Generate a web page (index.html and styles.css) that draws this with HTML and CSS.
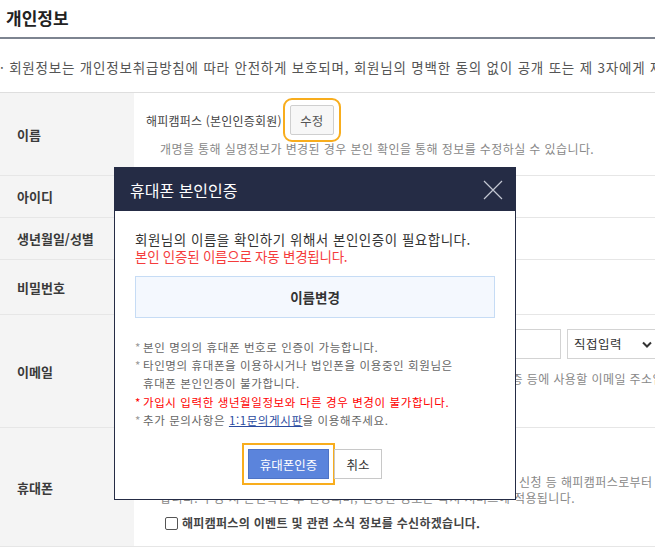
FILE: index.html
```html
<!DOCTYPE html>
<html lang="ko">
<head>
  <meta charset="UTF-8" />
  <meta name="viewport" content="width=device-width, initial-scale=1" />
  <title>개인정보</title>
  <link rel="stylesheet" href="styles.css">
</head>
<body>
  <div class="page">
    <h2 class="page-title">개인정보</h2>
    <p class="notice">· 회원정보는 개인정보취급방침에 따라 안전하게 보호되며, 회원님의 명백한 동의 없이 공개 또는 제 3자에게 제공되지 않습니다.</p>

    <div class="info-table">
      <div class="row row-name">
        <div class="th">이름</div>
        <div class="td">
          <div class="name-line">
            <span class="name-text">해피캠퍼스 (본인인증회원)</span>
            <button class="btn-edit">수정</button>
          </div>
          <p class="help">개명을 통해 실명정보가 변경된 경우 본인 확인을 통해 정보를 수정하실 수 있습니다.</p>
        </div>
      </div>
      <div class="row row-id">
        <div class="th">아이디</div>
        <div class="td"></div>
      </div>
      <div class="row row-birth">
        <div class="th">생년월일/성별</div>
        <div class="td"></div>
      </div>
      <div class="row row-pw">
        <div class="th">비밀번호</div>
        <div class="td"></div>
      </div>
      <div class="row row-email">
        <div class="th">이메일</div>
        <div class="td">
          <div class="email-line">
            <span class="field field-email"></span>
            <span class="field field-select">직접입력
              <svg class="chev" width="10" height="7" viewBox="0 0 10 7"><path d="M1 1.5 L5 5.5 L9 1.5" fill="none" stroke="#333" stroke-width="2"/></svg>
            </span>
          </div>
          <p class="help">아이디/비밀번호 찾기, 본인 확인 및 이벤트 당첨 안내, 휴대폰본인인증 등에 사용할 이메일 주소입니다.</p>
        </div>
      </div>
      <div class="row row-phone">
        <div class="th">휴대폰</div>
        <div class="td">
          <div class="phone-line">
            <span class="field field-phone"></span>
          </div>
          <p class="help help-phone">휴대폰 번호는 아이디/비밀번호 찾기, 본인 확인, 이벤트 응모 및 자료 신청 등 해피캠퍼스로부터<br>합니다. 수정 시 본인확인 후 변경되며, 변경된 정보는 즉시 서비스에 적용됩니다.</p>
          <label class="check-line"><span class="checkbox"></span>해피캠퍼스의 이벤트 및 관련 소식 정보를 수신하겠습니다.</label>
        </div>
      </div>
    </div>

    <div class="modal">
      <div class="modal-head">
        <span class="modal-title">휴대폰 본인인증</span>
        <svg class="modal-close" width="20" height="20" viewBox="0 0 20 20">
          <path d="M1 1 L19 19 M19 1 L1 19" stroke="#c3c7d2" stroke-width="1.2" fill="none"/>
        </svg>
      </div>
      <div class="modal-body">
        <p class="modal-text">회원님의 이름을 확인하기 위해서 본인인증이 필요합니다.</p>
        <p class="modal-text red">본인 인증된 이름으로 자동 변경됩니다.</p>
        <div class="name-box">이름변경</div>
        <ul class="guide">
          <li>본인 명의의 휴대폰 번호로 인증이 가능합니다.</li>
          <li>타인명의 휴대폰을 이용하시거나 법인폰을 이용중인 회원님은<br>휴대폰 본인인증이 불가합니다.</li>
          <li class="red">가입시 입력한 생년월일정보와 다른 경우 변경이 불가합니다.</li>
          <li>추가 문의사항은 <a href="#">1:1문의게시판</a>을 이용해주세요.</li>
        </ul>
        <div class="modal-buttons">
          <button class="btn-auth">휴대폰인증</button>
          <button class="btn-cancel">취소</button>
        </div>
      </div>
    </div>
  </div>
</body>
</html>
```

FILE: styles.css
```css
body {
  margin: 0;
  background: #fff;
  font-family: "Noto Sans CJK KR", "Noto Sans", sans-serif;
  color: #333;
}
.page {
  position: relative;
  width: 655px;
  height: 548px;
  overflow: hidden;
  white-space: nowrap;
}
.page-title {
  margin: 0;
  padding: 0 0 2px 6px;
  font-size: 17px;
  line-height: 35px;
  font-weight: bold;
  color: #222;
  border-bottom: 2px solid #7d8490;
}
.notice {
  margin: 18px 0 15px;
  font-size: 13.5px;
  letter-spacing: 0.8px;
  line-height: 20px;
  color: #555;
}
.info-table {
  border-top: 1px solid #dedede;
}
.row {
  display: grid;
  grid-template-columns: 134px 1fr;
  box-sizing: border-box;
  border-bottom: 1px solid #e6e6e6;
}
.row-name { height: 83px; }
.row-id { height: 42px; }
.row-birth { height: 42px; }
.row-pw { height: 55px; }
.row-email { height: 113px; }
.row-phone { height: 119px; }
.th {
  background: #f4f4f4;
  display: flex;
  align-items: center;
  padding-left: 17px;
  font-size: 13px;
  font-weight: bold;
  color: #3a3a3a;
}
.td {
  padding-left: 12px;
  overflow: hidden;
}
.help {
  margin: 0;
  font-size: 12px;
  letter-spacing: 0.4px;
  line-height: 16px;
  color: #888;
}
.name-line {
  display: flex;
  align-items: center;
  margin-top: 12px;
  height: 30px;
}
.name-text {
  font-size: 12px;
  letter-spacing: 0.2px;
  color: #444;
}
.btn-edit {
  margin-left: 8px;
  width: 44px;
  height: 30px;
  background: #f7f7f7;
  border: 1px solid #cfcfcf;
  border-radius: 2px;
  font-family: inherit;
  font-size: 12.5px;
  color: #555;
  outline: 2px solid #f8ad1d;
  outline-offset: 5px;
}
.row-name .help {
  padding-left: 14px;
  margin-top: 6px;
}
.email-line {
  display: flex;
  gap: 6px;
  margin-top: 14px;
}
.field {
  display: inline-block;
  box-sizing: border-box;
  height: 30px;
  border: 1px solid #d3d3d3;
  background: #fff;
}
.field-email {
  flex: none;
  width: 415px;
}
.field-select {
  flex: none;
  width: 110px;
  padding-left: 6px;
  font-size: 12.5px;
  letter-spacing: 0.5px;
  line-height: 28px;
  color: #333;
  position: relative;
}
.chev {
  position: absolute;
  left: 74px;
  top: 11px;
}
.row-email .help {
  margin-top: 12px;
  padding-left: 14px;
}
.phone-line {
  margin-top: 8px;
}
.field-phone { width: 300px; }
.help-phone {
  margin-top: 3px;
  padding-left: 14px;
}
.check-line {
  display: flex;
  align-items: center;
  margin-top: 9px;
  padding-left: 19px;
  font-size: 12px;
  letter-spacing: 0.3px;
  line-height: 16px;
  color: #444;
  font-weight: bold;
}
.checkbox {
  width: 11px;
  height: 11px;
  border: 1px solid #555;
  border-radius: 2px;
  margin-right: 4px;
}
.modal {
  position: absolute;
  left: 114px;
  top: 167px;
  width: 402px;
  height: 333px;
  box-sizing: border-box;
  border: 1px solid #252c45;
  background: #fff;
}
.modal-head {
  height: 43px;
  background: #252c45;
  display: flex;
  align-items: center;
  justify-content: space-between;
  padding: 0 12px 0 15px;
}
.modal-title {
  font-size: 16px;
  color: #fff;
}
.modal-body {
  padding: 20px 20px 0;
}
.modal-text {
  margin: 0;
  font-size: 13.5px;
  letter-spacing: 0.5px;
  line-height: 17px;
  color: #333;
}
.modal-text.red {
  letter-spacing: -0.25px;
}
.red {
  color: #f53c3c;
}
.name-box {
  margin-top: 11px;
  height: 42px;
  box-sizing: border-box;
  border: 1px solid #c6dcf5;
  background: #f4f8fe;
  text-align: center;
  line-height: 40px;
  font-size: 13.5px;
  font-weight: bold;
  color: #333;
}
.guide {
  list-style: none;
  margin: 20px 0 0;
  padding: 0 0 0 8px;
  font-size: 11.5px;
  letter-spacing: 0.6px;
  line-height: 18.2px;
  color: #666;
}
.guide li {
  position: relative;
}
.guide li::before {
  content: "*";
  position: absolute;
  left: -8px;
  color: #999;
}
.guide li.red {
  color: #f00;
}
.guide li.red::before {
  color: #f00;
}
.guide a {
  color: #2b4ba0;
}
.modal-buttons {
  display: flex;
  justify-content: center;
  gap: 5px;
  margin-top: 20px;
}
.modal-buttons button {
  height: 30px;
  font-family: inherit;
  font-size: 12.5px;
  border-radius: 0;
}
.btn-auth {
  width: 81px;
  background: #5b84dc;
  border: 1px solid #4e73c5;
  color: #fff;
  outline: 2px solid #f8ad1d;
  outline-offset: 4px;
}
.btn-cancel {
  width: 48px;
  background: #fff;
  border: 1px solid #c8c8c8;
  color: #333;
}
```
